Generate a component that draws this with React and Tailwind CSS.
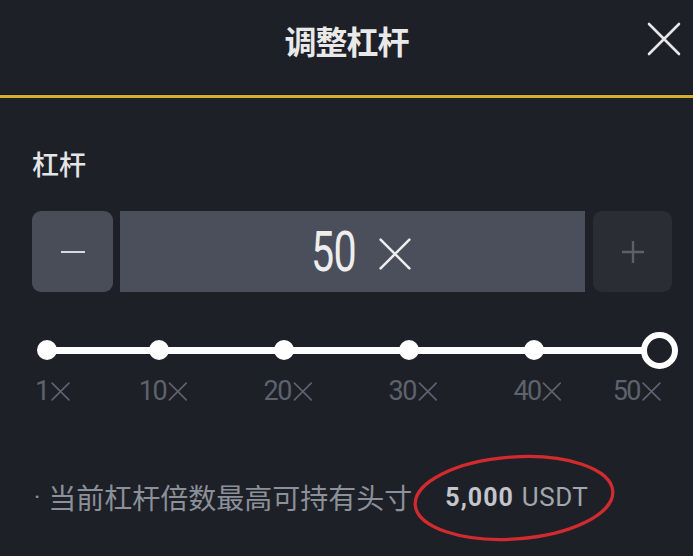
import React from "react";

const marks = [1, 10, 20, 30, 40, 50];
const TRACK_L = 47;
const TRACK_R = 659;
const pos = (v) => TRACK_L + ((v - 1) / 49) * (TRACK_R - TRACK_L);

function XMark({ size = 14, stroke = 1.6, className = "" }) {
  return (
    <svg width={size} height={size} viewBox="0 0 20 20" className={className}>
      <path d="M2 2 L18 18 M18 2 L2 18" stroke="currentColor" strokeWidth={stroke} strokeLinecap="round" fill="none" />
    </svg>
  );
}

export default function App() {
  return (
    <div className="w-[693px] h-[556px] bg-[#1e2027] overflow-hidden font-['Roboto','Noto_Sans_CJK_SC',sans-serif] text-[#e9e9ea]">
      {/* header */}
      <div className="h-[95px] pb-[18px] grid grid-cols-[1fr_auto_1fr] items-center">
        <div />
        <div className="text-[32px] font-bold tracking-[-1px] leading-none pt-[2px] font-['Noto_Sans_CJK_SC',sans-serif]">调整杠杆</div>
        <div className="flex justify-end pr-[12px]">
          <svg width="34" height="34" viewBox="0 0 34 34" className="text-[#e6e7e9]">
            <path d="M2 2 L32 32 M32 2 L2 32" stroke="currentColor" strokeWidth="2.6" strokeLinecap="round" fill="none" />
          </svg>
        </div>
      </div>
      <div className="h-[3px] bg-[#d7ad2f] shadow-[0_-1px_0_#15161a]" />

      {/* body */}
      <div className="pl-[32px] pr-[21px] pt-[51px]">
        <div className="text-[27px] leading-[30px] font-medium text-[#e4e5e7] font-['Noto_Sans_CJK_SC',sans-serif]">杠杆</div>

        <div className="mt-[32px] flex h-[81px]">
          <div className="w-[81px] rounded-[9px] bg-[#484d58] flex items-center justify-center">
            <div className="w-[24px] h-[2px] bg-[#d9dadd]" />
          </div>
          <div className="ml-[7px] w-[465px] bg-[#4a4f5b] flex items-center justify-center pl-[4px]">
            <span className="inline-block text-[55px] leading-none font-normal scale-x-75 origin-right tracking-[-1px] text-[#eeeeef] mt-[2px]">50</span>
            <XMark size={36} stroke={1.4} className="ml-[22px] text-[#eeeeef] mt-[4px]" />
          </div>
          <div className="ml-[8px] w-[79px] rounded-[9px] bg-[#2a2d34] flex items-center justify-center">
            <svg width="24" height="24" viewBox="0 0 24 24" className="text-[#5b606a]">
              <path d="M12 1 V23 M1 12 H23" stroke="currentColor" strokeWidth="2.4" fill="none" />
            </svg>
          </div>
        </div>
      </div>

      {/* slider */}
      <div className="relative mt-[20px] h-[83px]">
        <div className="absolute top-[35px] h-[7px] bg-white rounded-full" style={{ left: TRACK_L, width: TRACK_R - TRACK_L }} />
        {marks.slice(0, 5).map((m) => (
          <div key={m} className="absolute top-[28px] w-[20px] h-[20px] rounded-full bg-white" style={{ left: pos(m) - 10 }} />
        ))}
        <div className="absolute top-[20px] w-[37px] h-[37px] rounded-full border-[6px] border-white bg-[#1e2027]" style={{ left: TRACK_R - 18.5 }} />
        {marks.map((m, i) => {
          const first = i === 0;
          const last = i === marks.length - 1;
          const style = first ? { left: 35 } : last ? { right: 693 - 662 } : { left: pos(m) + 4, transform: "translateX(-50%)" };
          return (
            <div key={m} className="absolute top-[66px] flex items-center text-[#5d626d]" style={style}>
              <span className="inline-block text-[27px] leading-none tracking-[-1.5px]">{m}</span>
              <XMark size={21} stroke={1.6} className="ml-[1px]" />
            </div>
          );
        })}
      </div>

      {/* footer */}
      <div className="relative mt-[87px] pl-[34px] flex items-center h-[30px]">
        <span className="text-[24px] leading-none text-[#8b9099]">·</span>
        <span className="ml-[8px] text-[28px] leading-none text-[#8b9099] font-['Noto_Sans_CJK_SC',sans-serif]">当前杠杆倍数最高可持有头寸</span>
        <span className="ml-[33px] text-[25px] leading-none font-bold tracking-[1px] text-[#c3c6cc]">5,000</span>
        <span className="ml-[8px] text-[26px] leading-none tracking-[0.5px] text-[#a2a6ad]">USDT</span>
        <svg className="absolute left-[410px] top-[-30px]" width="210" height="92" viewBox="0 0 210 92">
          <ellipse cx="104" cy="46" rx="99" ry="41" transform="rotate(-4 104 46)" stroke="#d22b2f" strokeWidth="3.2" fill="none" />
        </svg>
      </div>
    </div>
  );
}
